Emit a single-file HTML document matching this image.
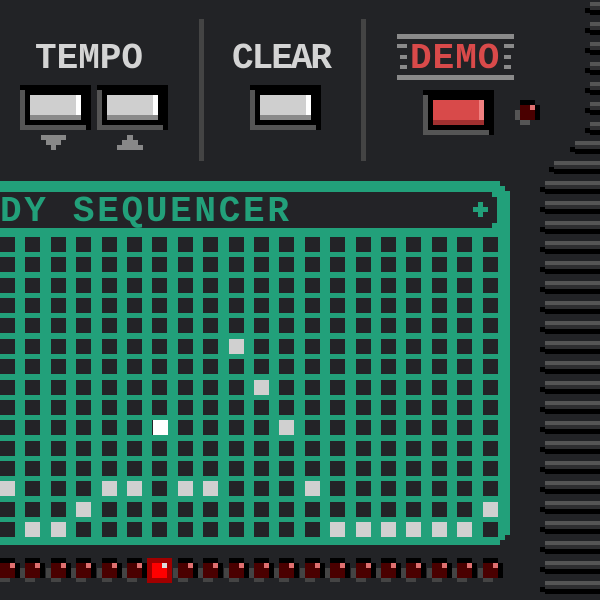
<!DOCTYPE html>
<html><head><meta charset="utf-8"><style>
*{margin:0;padding:0;box-sizing:border-box}
body{width:600px;height:600px;overflow:hidden;background:#222326;position:relative;font-family:"Liberation Mono",monospace;font-weight:bold}
.a{position:absolute}
.lbl{position:absolute;font-size:36px;line-height:36px;color:#d4d4d4;letter-spacing:0px}
</style></head><body>
<div class="lbl" style="left:35px;top:41px">TEMPO</div>
<div class="lbl" style="left:232px;top:41px;letter-spacing:-2px">CLEAR</div>
<div class="lbl" style="left:410px;top:41px;color:#d94a4a;letter-spacing:1px">DEMO</div>
<div class="a" style="left:397px;top:34px;width:117px;height:5px;background:#8a8a8a"></div>
<div class="a" style="left:397px;top:75px;width:117px;height:5px;background:#8a8a8a"></div>
<div class="a" style="left:397px;top:44px;width:10px;height:4px;background:#8a8a8a"></div>
<div class="a" style="left:400px;top:55px;width:7px;height:4px;background:#8a8a8a"></div>
<div class="a" style="left:400px;top:65px;width:7px;height:4px;background:#8a8a8a"></div>
<div class="a" style="left:504px;top:44px;width:10px;height:4px;background:#8a8a8a"></div>
<div class="a" style="left:504px;top:55px;width:7px;height:4px;background:#8a8a8a"></div>
<div class="a" style="left:504px;top:65px;width:7px;height:4px;background:#8a8a8a"></div>
<div class="a" style="left:199px;top:19px;width:5px;height:142px;background:#444"></div>
<div class="a" style="left:361px;top:19px;width:5px;height:142px;background:#444"></div>
<div id="root"></div>
<script>
var r=document.getElementById('root'),h='';
function d(x,y,w,hh,c){h+='<div class="a" style="left:'+x+'px;top:'+y+'px;width:'+w+'px;height:'+hh+'px;background:'+c+'"></div>';}
function btn(x,y,face,hi,sh){
 d(x,y,71,45,'#000');
 d(x,y+5,66,40,'#555');d(x+5,y+5,61,35,'#000');
 d(x+10,y+10,51,25,sh);d(x+10,y+10,51,20,face);d(x+56,y+10,5,20,hi);
 d(x+66,y+5,5,40,'#000');
}
btn(20,85,'#cfcfcf','#fff','#8a8a8a');btn(97,85,'#cfcfcf','#fff','#8a8a8a');btn(250,85,'#cfcfcf','#fff','#8a8a8a');
btn(423,90,'#d84a4a','#f08080','#a03030');
d(41,135,25,5,'#888');d(46,140,15,5,'#888');d(51,145,5,5,'#888');
d(117,145,26,5,'#888');d(122,140,16,5,'#888');d(127,135,6,5,'#888');
d(520,100,15,5,'#000');d(515,110,5,10,'#555');d(520,120,10,5,'#555');d(520,105,15,15,'#4a0000');d(530,105,5,5,'#e07070');d(535,105,5,15,'#000');
function bar(x,y){d(x,y,600-x,4,'#555');d(x,y+4,600-x,4,'#2e2e30');d(x,y+8,600-x,5,'#000');d(x-5,y+6,5,5,'#000');}
for(var y=-18;y<140;y+=20)bar(590,y);
bar(575,141);bar(554,161);
for(var y=181;y<600;y+=20)bar(545,y);
var G='#22a07a';
d(0,181,500,364,G);d(500,186,5,354,G);d(505,191,5,344,G);
d(0,192,492,36,'#232327');d(492,197,5,26,'#232327');
d(478,202,5,15,G);d(473,207,15,5,G);
for(var rr=0;rr<15;rr++)for(var c=0;c<20;c++){
 var x=Math.round(c*25.4),y=Math.round(237+rr*20.36);
 d(x,y,15,15,'#232327');
}
var lit=[[14,1],[14,2],[14,13],[14,14],[14,15],[14,16],[14,17],[14,18],[13,3],[13,19],[12,0],[12,4],[12,5],[12,7],[12,8],[12,12],[9,11],[7,10],[5,9]];
lit.forEach(function(p){d(Math.round(p[1]*25.4),Math.round(237+p[0]*20.36),15,15,'#d0d0d0');});
d(153,420,15,15,'#ffffff');
for(var c=0;c<20;c++){var x=Math.round(c*25.4);
 d(x,558,15,5,'#000');d(x-5,568,5,10,'#444');d(x,578,10,4,'#444');
 if(c==6){d(x-5,558,25,25,'#a00000');d(x,563,15,15,'#ff0000');d(x+10,563,5,5,'#ddd');}
 else{d(x,563,15,15,'#4a0000');d(x+10,563,5,5,'#e07070');d(x+15,563,5,15,'#000');}
}
r.innerHTML=h;
</script>
<div class="a" style="left:0;top:194px;font-size:36px;line-height:36px;color:#22a07a;letter-spacing:2.7px">DY SEQUENCER</div>
</body></html>
